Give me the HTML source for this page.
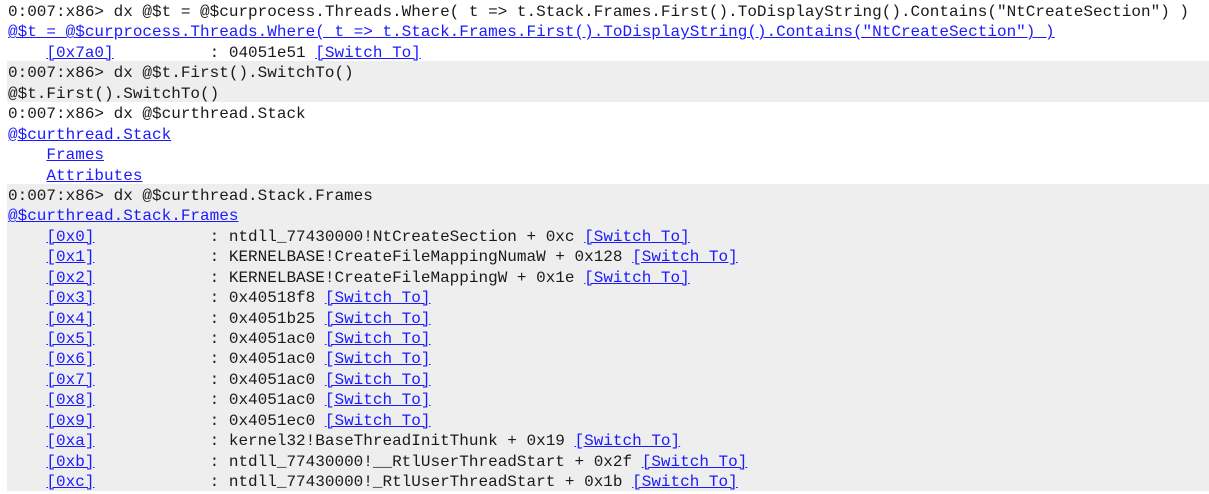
<!DOCTYPE html>
<html><head><style>
html,body{margin:0;padding:0;background:#fff;width:1209px;height:494px;overflow:hidden}
.w{position:absolute;left:0;top:0;width:1209px}
.l{height:20.45px;line-height:24px;font-family:"Liberation Mono",monospace;font-size:16px;color:#1a1a1a;white-space:pre;padding-left:8px;box-sizing:border-box;overflow:visible}
.g{background:#eeeeee;margin-left:7px;padding-left:1px}
a{color:#1a1aff;text-decoration:underline}
</style></head><body><div class="w">
<div class="l">0:007:x86&gt; dx @$t = @$curprocess.Threads.Where( t =&gt; t.Stack.Frames.First().ToDisplayString().Contains("NtCreateSection") )</div>
<div class="l"><a>@$t = @$curprocess.Threads.Where( t =&gt; t.Stack.Frames.First().ToDisplayString().Contains("NtCreateSection") )</a></div>
<div class="l">    <a>[0x7a0]</a>          : 04051e51 <a>[Switch To]</a></div>
<div class="l g">0:007:x86&gt; dx @$t.First().SwitchTo()</div>
<div class="l g">@$t.First().SwitchTo()</div>
<div class="l">0:007:x86&gt; dx @$curthread.Stack</div>
<div class="l"><a>@$curthread.Stack</a></div>
<div class="l">    <a>Frames</a></div>
<div class="l">    <a>Attributes</a></div>
<div class="l g">0:007:x86&gt; dx @$curthread.Stack.Frames</div>
<div class="l g"><a>@$curthread.Stack.Frames</a></div>
<div class="l g">    <a>[0x0]</a>            : ntdll_77430000!NtCreateSection + 0xc <a>[Switch To]</a></div>
<div class="l g">    <a>[0x1]</a>            : KERNELBASE!CreateFileMappingNumaW + 0x128 <a>[Switch To]</a></div>
<div class="l g">    <a>[0x2]</a>            : KERNELBASE!CreateFileMappingW + 0x1e <a>[Switch To]</a></div>
<div class="l g">    <a>[0x3]</a>            : 0x40518f8 <a>[Switch To]</a></div>
<div class="l g">    <a>[0x4]</a>            : 0x4051b25 <a>[Switch To]</a></div>
<div class="l g">    <a>[0x5]</a>            : 0x4051ac0 <a>[Switch To]</a></div>
<div class="l g">    <a>[0x6]</a>            : 0x4051ac0 <a>[Switch To]</a></div>
<div class="l g">    <a>[0x7]</a>            : 0x4051ac0 <a>[Switch To]</a></div>
<div class="l g">    <a>[0x8]</a>            : 0x4051ac0 <a>[Switch To]</a></div>
<div class="l g">    <a>[0x9]</a>            : 0x4051ec0 <a>[Switch To]</a></div>
<div class="l g">    <a>[0xa]</a>            : kernel32!BaseThreadInitThunk + 0x19 <a>[Switch To]</a></div>
<div class="l g">    <a>[0xb]</a>            : ntdll_77430000!__RtlUserThreadStart + 0x2f <a>[Switch To]</a></div>
<div class="l g">    <a>[0xc]</a>            : ntdll_77430000!_RtlUserThreadStart + 0x1b <a>[Switch To]</a></div>
</div></body></html>
